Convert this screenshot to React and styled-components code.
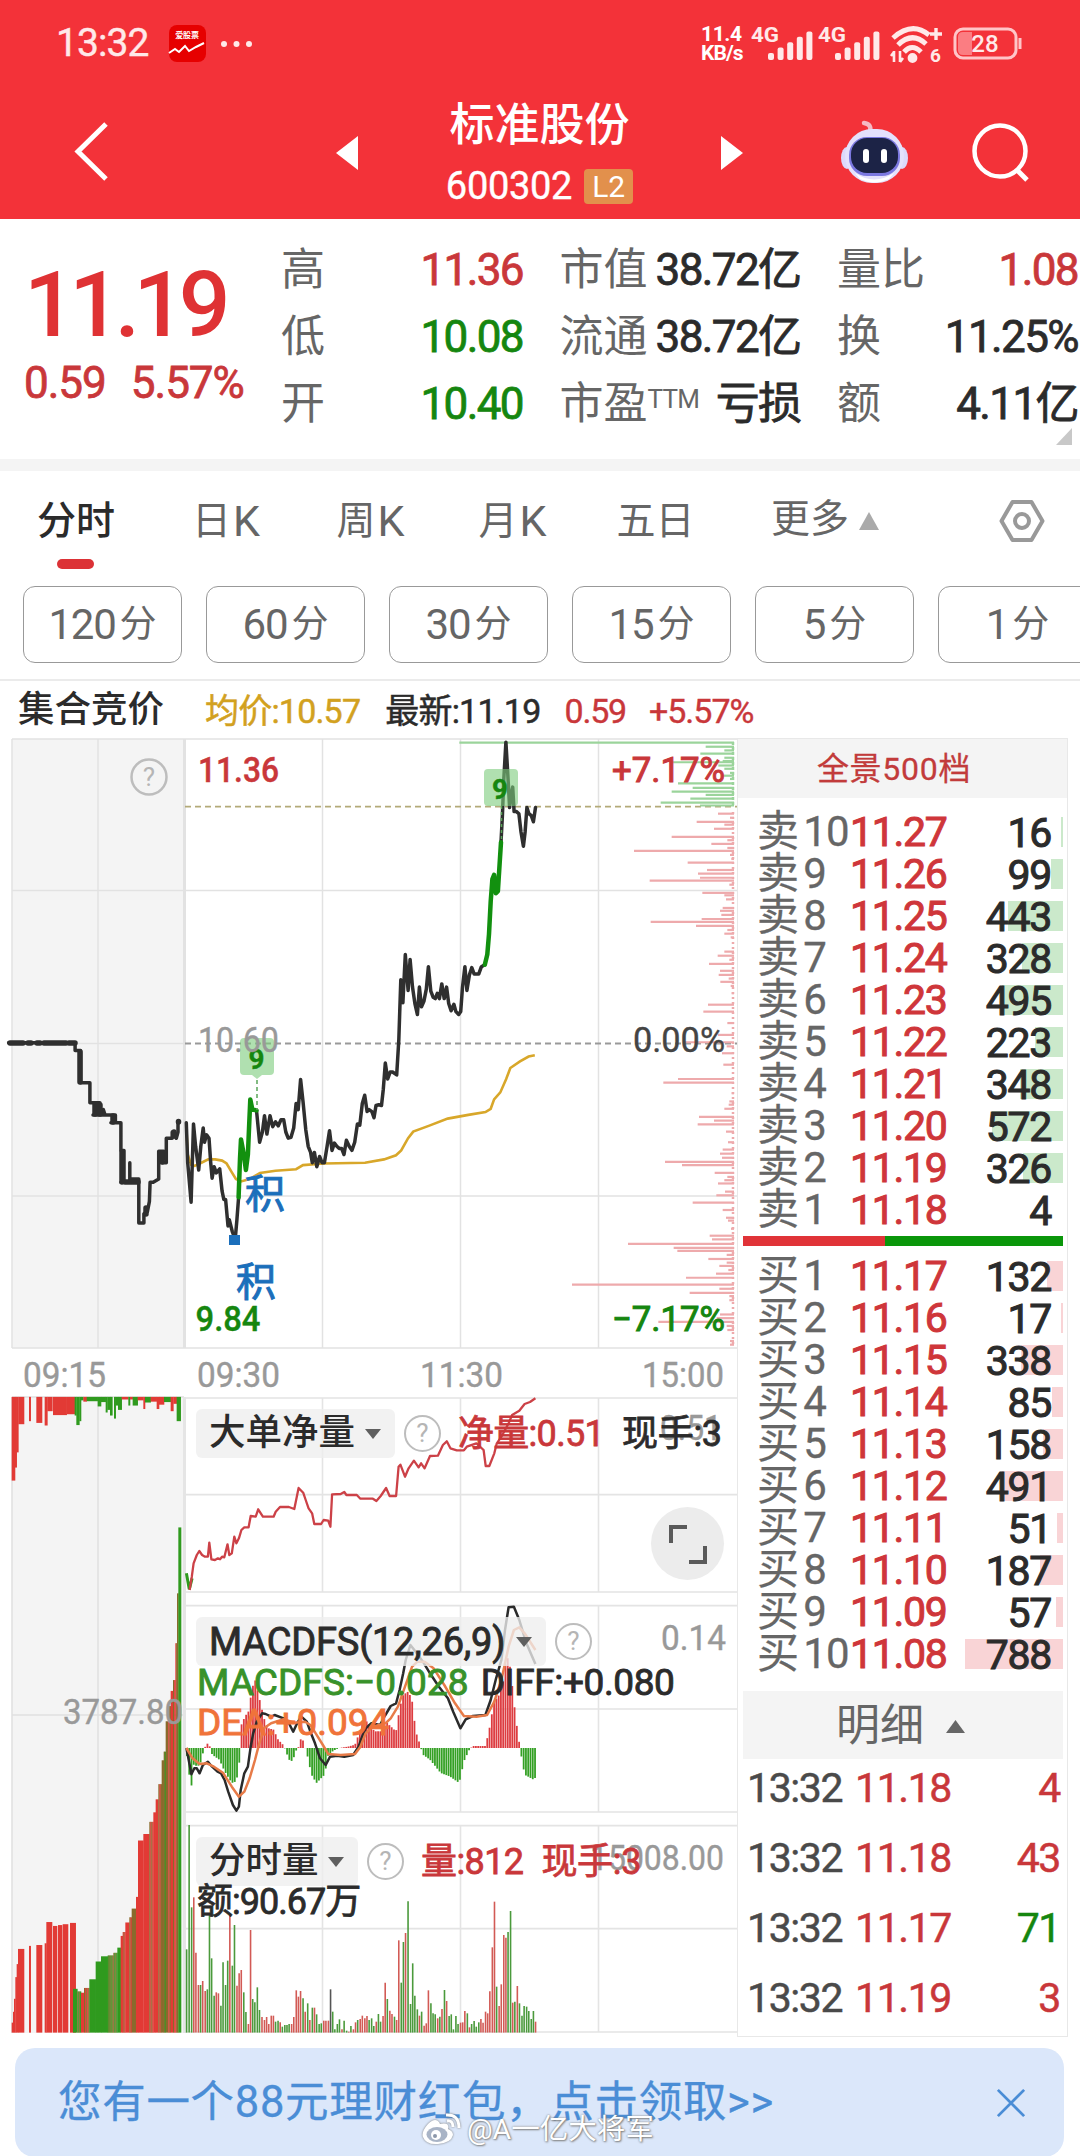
import React from 'react';
import styled, { createGlobalStyle } from 'styled-components';

const RED = '#c9373a';
const BRIGHT_RED = '#df3234';
const GREEN = '#15860f';
const INK = '#2b2b2b';
const GRAY = '#666';
const FONT = `Roboto, "Noto Sans CJK SC", sans-serif`;

const Global = createGlobalStyle`
  html, body { margin: 0; padding: 0; background: #fff; }
  body { font-family: ${FONT}; }
  * { box-sizing: border-box; }
  svg { display: block; overflow: visible; }
`;

const Page = styled.div`
  width: 1080px;
  height: 2156px;
  overflow: hidden;
  background: #fff;
  color: ${INK};
  display: flex;
  flex-direction: column;
`;

const Text = styled.span`
  font-size: ${p => p.$s}px;
  line-height: 1;
  font-weight: ${p => p.$b || 400};
  letter-spacing: ${p => p.$ls || 0}px;
  color: ${p => p.$c || 'inherit'};
  white-space: pre;
  margin-left: ${p => p.$ml || 0}px;
  -webkit-text-stroke: ${p => p.$k || 0}px;
`;

/* ---------- red header ---------- */

const Header = styled.header`
  height: 219px;
  flex: none;
  background: #f33239;
  color: #fff;
`;
const StatusBar = styled.div`
  height: 87px;
  padding: 0 58px 0 56px;
  display: flex;
  align-items: center;
  justify-content: space-between;
`;
const StatusGroup = styled.div`
  display: flex;
  align-items: center;
`;
const AppBadge = styled.div`
  width: 37px;
  height: 37px;
  margin: 0 15px 0 20px;
  border-radius: 8px;
  background: #e60000;
  display: flex;
  flex-direction: column;
  align-items: center;
  justify-content: center;
  gap: 2px;
`;
const Speed = styled.div`
  display: flex;
  flex-direction: column;
  width: 50px;
  font-size: 21px;
  font-weight: 700;
  line-height: 19px;
  letter-spacing: -0.4px;
  span + span { letter-spacing: -0.9px; }
`;
const NavBar = styled.div`
  height: 132px;
  display: grid;
  grid-template-columns: 336px 22px 363px 22px 98px 67px 1fr;
  align-items: center;
`;
const BackSlot = styled.div`
  padding: 0 0 3px 72px;
`;
const TitleBlock = styled.div`
  height: 132px;
  padding-top: 16px;
  display: flex;
  flex-direction: column;
  align-items: center;
  gap: 21px;
`;
const CodeRow = styled.div`
  display: flex;
  align-items: center;
  gap: 12px;
  height: 34px;
`;
const LevelBadge = styled.span`
  width: 49px;
  height: 35px;
  border-radius: 4px;
  background: #e2904c;
  font-size: 30px;
  line-height: 36px;
  text-align: center;
`;

function Signal() {
  return (
    <svg width="67" height="38" viewBox="0 0 67 38" fill="#ffe9e9">
      <text x="0" y="17" fontSize="21" fontWeight="700" textLength="28" lengthAdjust="spacingAndGlyphs" fontFamily="Roboto">4G</text>
      {[0, 1, 2, 3, 4].map(i => (
        <rect key={i} x={17 + i * 9.6} y={28 - i * 5.4} width="6" height={7 + i * 5.4} rx="2" />
      ))}
    </svg>
  );
}

function Robot() {
  return (
    <svg width="67" height="66" viewBox="0 0 67 66">
      <path d="M29 12 Q31 4 23 3" stroke="#f5b9c4" strokeWidth="4.500" fill="none" strokeLinecap="round" />
      <ellipse cx="6" cy="38" rx="6" ry="11" fill="#dcd9fb" />
      <ellipse cx="61" cy="38" rx="6" ry="11" fill="#dcd9fb" />
      <rect x="4" y="9" width="59" height="54" rx="27" fill="#e4e1fc" />
      <path d="M14 53 Q33 66 53 53 L48 59 Q33 66 19 59 Z" fill="#fff" />
      <rect x="8" y="17" width="51" height="39" rx="18" fill="#7b78e0" />
      <rect x="10" y="18" width="47" height="35" rx="16" fill="#1c2346" />
      <rect x="22" y="29" width="6" height="14" rx="3" fill="#fff" />
      <rect x="40" y="29" width="6" height="14" rx="3" fill="#fff" />
    </svg>
  );
}

function AppHeader() {
  return (
    <Header>
      <StatusBar>
        <StatusGroup>
          <Text $s={39} $ls={-0.9} $k={0.4} $c="#ffe9e9">13:32</Text>
          <AppBadge>
            <Text $s={8} $b={700} $c="#fff">爱股票</Text>
            <svg width="36" height="13" viewBox="0 0 36 13" fill="none" stroke="#fff" strokeWidth="2">
              <path d="M0 11 L6 7 L10 10 L16 4 L20 9 L27 5 L35 1" />
            </svg>
          </AppBadge>
          <svg width="34" height="8" viewBox="0 0 34 8" fill="#ffe9e9">
            <circle cx="3" cy="4" r="3" /><circle cx="15.5" cy="4" r="3" /><circle cx="28" cy="4" r="3" />
          </svg>
        </StatusGroup>
        <StatusGroup>
          <Speed><span>11.4</span><span>KB/s</span></Speed>
          <Signal />
          <Signal />
          <svg width="67" height="38" viewBox="0 0 67 38" fill="none" stroke="#ffe9e9" strokeWidth="5">
            <path d="M8 13 Q27 -4 44 10" />
            <path d="M13 20 Q27 6 41 19" />
            <path d="M19 27 Q27 18 36 27" />
            <circle cx="27.5" cy="33" r="2.400" fill="#ffe9e9" />
            <path d="M45 9 H57 M51 3 V15" strokeWidth="3.400" />
            <path d="M9 26 V37 M6 31 L9 27 M15 37 V26 M18 33 L15 37" strokeWidth="2.600" />
            <text x="45" y="37" fontSize="19" fontWeight="700" fill="#ffe9e9" stroke="none" fontFamily="Roboto">6</text>
          </svg>
          <svg width="70" height="34" viewBox="0 0 70 34">
            <rect x="3" y="2" width="61" height="29" rx="8" fill="none" stroke="#ffc5c8" strokeWidth="3" />
            <path d="M11 5 H20 V28 H11 Q6 28 6 23 V10 Q6 5 11 5 Z" fill="#fb7d82" />
            <path d="M68 11 V22" stroke="#ffc5c8" strokeWidth="3" />
            <text x="33" y="25" fontSize="24" fontWeight="500" fill="#ffe9e9" textAnchor="middle" fontFamily="Roboto">28</text>
          </svg>
        </StatusGroup>
      </StatusBar>
      <NavBar>
        <BackSlot>
          <svg width="38" height="62" viewBox="0 0 38 62" fill="none" stroke="#fff" strokeWidth="5">
            <path d="M34 3 L6 30.5 L34 58" />
          </svg>
        </BackSlot>
        <svg width="22" height="34" viewBox="0 0 22 34"><path d="M22 0 V34 L0 17 Z" fill="#fff" /></svg>
        <TitleBlock>
          <Text $s={45} $b={500}>标准股份</Text>
          <CodeRow>
            <Text $s={38} $ls={-0.3} $k={0.4}>600302</Text>
            <LevelBadge>L2</LevelBadge>
          </CodeRow>
        </TitleBlock>
        <svg width="22" height="34" viewBox="0 0 22 34"><path d="M0 0 V34 L22 17 Z" fill="#fff" /></svg>
        <span />
        <Robot />
        <svg width="120" height="66" viewBox="0 0 120 66" fill="none" stroke="#fff" strokeWidth="4.500">
          <circle cx="92" cy="31" r="25.500" />
          <path d="M109 50 L119 60" strokeWidth="5" />
        </svg>
      </NavBar>
    </Header>
  );
}

/* ---------- quote summary ---------- */

const Quote = styled.section`
  height: 240px;
  flex: none;
  display: flex;
  position: relative;
`;
const LastPrice = styled.div`
  width: 281px;
  padding: 41px 0 0 24px;
  display: flex;
  flex-direction: column;
  color: ${BRIGHT_RED};
`;
const ChangeRow = styled.div`
  display: flex;
  gap: 25px;
  margin-top: 10px;
  color: ${RED};
`;
const StatGrid = styled.div`
  display: grid;
  grid-template-columns: 242px 241px 241px;
  grid-auto-rows: 67.2px;
  column-gap: 36.500px;
  padding-top: 17px;
`;
const Stat = styled.div`
  display: flex;
  align-items: center;
  justify-content: space-between;
`;
const StatLabel = styled.span`
  font-size: 44px;
  line-height: 1;
  color: ${GRAY};
  sup { font-size: 26px; line-height: 0; vertical-align: 11px; letter-spacing: -0.8px; }
`;
const StatValue = styled.span`
  font-size: 44px;
  line-height: 1;
  font-weight: ${p => (p.$b ? 500 : 400)};
  letter-spacing: -1.6px;
  color: ${p => p.$c || INK};
  -webkit-text-stroke: 0.8px;
`;
const Corner = styled.svg`
  position: absolute;
  left: 1056px;
  top: 209px;
`;

const STATS = [
  ['高', '11.36', RED], ['市值', '38.72亿'], ['量比', '1.08', RED],
  ['低', '10.08', GREEN], ['流通', '38.72亿'], ['换', '11.25%'],
  ['开', '10.40', GREEN], ['市盈', '亏损'], ['额', '4.11亿'],
];

function QuoteSummary() {
  return (
    <Quote>
      <LastPrice>
        <Text $s={91} $b={500} $ls={-6.4}>11.19</Text>
        <ChangeRow>
          <Text $s={44} $ls={-1} $k={0.8}>0.59</Text>
          <Text $s={44} $ls={-1} $k={0.8}>5.57%</Text>
        </ChangeRow>
      </LastPrice>
      <StatGrid>
        {STATS.map(([label, value, color]) => (
          <Stat key={label}>
            <StatLabel>{label}{label === '市盈' && <sup>TTM</sup>}</StatLabel>
            <StatValue $c={color}>{value}</StatValue>
          </Stat>
        ))}
      </StatGrid>
      <Corner width="16" height="17" viewBox="0 0 16 17"><path d="M16 0 V17 H0 Z" fill="#c8c8c8" /></Corner>
    </Quote>
  );
}

/* ---------- period tabs ---------- */

const Divider = styled.div`
  height: 12px;
  flex: none;
  background: #f4f4f4;
`;
const Tabs = styled.nav`
  height: 115px;
  flex: none;
  display: grid;
  grid-template-columns: 152px 148px 141px 143px 143px 230px 1fr;
  padding-top: 29px;
`;
const Tab = styled.div`
  position: relative;
  display: flex;
  align-items: flex-start;
  justify-content: ${p => p.$j || 'center'};
  font-size: 39px;
  line-height: 43px;
  font-weight: ${p => (p.$on ? 500 : 400)};
  color: ${p => (p.$on ? INK : GRAY)};
  &::after {
    content: '';
    display: ${p => (p.$on ? 'block' : 'none')};
    position: absolute;
    left: 57px;
    top: 59px;
    width: 37px;
    height: 10px;
    border-radius: 5px;
    background: #dc3236;
  }
`;
const Kay = styled.span`
  font-size: 43px;
  line-height: 43px;
  margin-left: 2px;
`;
const Periods = styled.div`
  display: flex;
  flex: none;
  gap: 24px;
  height: 95px;
  padding-left: 23px;
  border-bottom: 2px solid #ebebeb;
`;
const Period = styled.button`
  flex: none;
  width: 159px;
  height: 77px;
  border: 1.500px solid #999;
  border-radius: 12px;
  background: #fff;
  padding: 0;
  font: 400 40px/1 ${FONT};
  color: ${GRAY};
  display: flex;
  align-items: center;
  justify-content: center;
  gap: 4px;
  span:first-child { font-size: 42px; letter-spacing: -1.2px; }
  span:last-child { font-size: 37px; }
`;
const LegendBar = styled.div`
  height: 55px;
  flex: none;
  padding: 4px 0 0 18px;
  display: flex;
  align-items: center;
`;

function PeriodTabs() {
  return (
    <>
      <Tabs>
        <Tab $on>分时</Tab>
        <Tab>日<Kay>K</Kay></Tab>
        <Tab>周<Kay>K</Kay></Tab>
        <Tab>月<Kay>K</Kay></Tab>
        <Tab>五日</Tab>
        <Tab $j="flex-start">
          <Text $s={39} $ml={44}>更多</Text>
          <svg width="32" height="34" viewBox="0 0 32 34"><path d="M10 30 L20 12 L30 30 Z" fill="#aaa" /></svg>
        </Tab>
        <Tab $j="flex-start">
          <svg style={{ marginLeft: 42 }} width="48" height="46" viewBox="0 0 48 46" fill="none" stroke="#999" strokeWidth="4" strokeLinejoin="round">
            <path d="M13.500 2 H32.500 L43.500 21 L32.500 40 H13.500 L2.500 21 Z" />
            <circle cx="23" cy="21" r="7" />
          </svg>
        </Tab>
      </Tabs>
      <Periods>
        {[120, 60, 30, 15, 5, 1].map(n => <Period key={n}><span>{n}</span><span>分</span></Period>)}
      </Periods>
      <LegendBar>
        <Text $s={36.500} $b={500}>集合竞价</Text>
        <Text $s={34} $ml={41} $ls={-0.8} $k={0.5} $c="#d2a11f">均价:10.57</Text>
        <Text $s={34} $ml={25} $ls={-0.8} $k={0.5}>最新:11.19</Text>
        <Text $s={34} $ml={24} $ls={-1.2} $k={0.4} $c={RED}>0.59</Text>
        <Text $s={34} $ml={23} $ls={-1} $k={0.4} $c={RED}>+5.57%</Text>
      </LegendBar>
    </>
  );
}

/* ---------- chart helpers ---------- */

// Series are stored on a fine integer grid; a scale maps that grid to pixels.
const scale = (kx, ox, ky, oy) => ({ x: v => v / kx + ox, y: v => v / ky + oy });
const trace = (s, pts) =>
  pts.trim().split(/\s+/).map(p => {
    const [x, y] = p.split(',').map(Number);
    return `${s.x(x).toFixed(1)},${s.y(y).toFixed(1)}`;
  }).join(' ');

function Label({ x, y, w, s = 35, c = '#999', b = 400, k = 0.4, children }) {
  return (
    <text x={x} y={y} fontSize={s} fill={c} stroke={c} strokeWidth={k} fontWeight={b} textLength={w} lengthAdjust="spacingAndGlyphs" fontFamily={FONT}>
      {children}
    </text>
  );
}

function Help({ cx, cy, r = 17 }) {
  return (
    <g>
      <circle cx={cx} cy={cy} r={r} fill="none" stroke="#bdbdbd" strokeWidth="2.500" />
      <text x={cx} y={cy + 9} fontSize="26" fill="#b5b5b5" textAnchor="middle" fontFamily="Roboto">?</text>
    </g>
  );
}

/* ---------- main intraday chart ---------- */

const P = scale(2.904, 0, 2.45, 730);
const D = scale(3, 440, 2.45, 730);

const AUCTION = '25,766 218,766 218,785 234,785 234,864 261,864 261,913 290,913 290,943 270,943 300,943 300,930 305,943 335,943 335,962 322,962 351,962 351,1030 360,1030 360,1108 351,1108 377,1108 377,1060 377,1100 403,1100 403,1208 418,1208 418,1185 428,1180 434,1155 436,1108 445,1108 461,1100 461,1032 475,1032 472,1060 483,1060 483,1000 500,1000 500,985 512,1000 517,985 517,962';
const PRICE_1 = '541,962 545,1060 555,1157 562,965 568,1020 577,1078 583,1020 590,975 594,1010 600,992 607,1000 612,1060 616,1098 622,1070 628,1085 638,1075 645,1130 650,1150 655,1150 662,1215 666,1200 675,1230 683,1248 688,1200 693,1145';
const RISE_1 = '693,1145 697,1050 700,1003 708,1040 714,1078 720,1040 724,960 727,905 733,930 745,932';
const PRICE_2 = '745,932 754,1010 762,985 768,945 775,990 784,945 792,972 800,960 808,970 816,955 824,955 830,985 837,1000 845,998 853,975 860,915 866,930 873,856 880,910 888,980 895,1020 902,1035 907,1060 913,1035 920,1070 928,1045 935,1060 942,1060 950,1020 957,982 964,1030 971,1012 978,1020 985,1025 992,1025 999,1040 1006,1005 1014,1020 1022,1030 1030,1010 1038,965 1045,968 1052,915 1059,895 1066,935 1072,930 1080,935 1086,950 1092,920 1100,918 1108,920 1113,880 1119,816 1126,855 1133,838 1140,838 1152,845 1158,760 1164,612 1170,668 1177,550 1185,638 1191,562 1198,630 1205,670 1212,697 1218,630 1224,678 1231,665 1238,635 1244,580 1251,640 1258,655 1264,658 1270,645 1276,658 1283,622 1290,658 1297,630 1303,670 1310,688 1318,672 1324,690 1332,697 1338,690 1343,630 1350,580 1356,638 1363,600 1370,582 1377,598 1390,598 1398,580 1408,575';
const RISE_2 = '1408,575 1415,550 1420,500 1425,420 1430,365 1435,355 1440,400 1446,395 1450,340 1455,275';
const PRICE_3 = '1455,275 1459,210 1463,120 1469,30 1474,100 1480,190 1484,160 1489,140 1493,200 1500,200 1507,205 1513,250 1520,285 1525,250 1530,190 1536,205 1543,210 1549,225 1555,190';
const AVERAGE = '541,970 545,1040 555,1065 565,1068 585,1060 605,1052 625,1052 645,1055 658,1062 672,1082 685,1100 700,1106 725,1100 755,1085 800,1080 860,1076 880,1066 940,1062 1060,1060 1115,1052 1150,1042 1165,1030 1185,1000 1200,984 1245,970 1300,952 1360,943 1410,936 1425,928 1435,905 1453,888 1470,855 1482,828 1510,812 1535,800 1553,797';

const PROFILE_UP = '31,58 41,797 50,853 58,781 68,853 76,848 79,697 87,835 95,853 105,870 112,850 120,870 131,714 142,758 151,695 159,797 168,751 178,662 185,780';
const PROFILE_DOWN = '205,834 215,870 225,770 232,853 242,822 262,695 270,862 279,814 289,862 296,582 306,870 316,874 325,743 343,801 352,774 362,780 369,629 379,868 399,787 405,853 415,858 436,848 443,840 453,844 463,785 470,632 480,768 490,862 499,853 508,872 543,853 553,833 563,868 573,807 590,840 600,836 609,866 617,841 627,872 645,875 673,804 690,790 718,862 747,834 765,735 775,860 792,846 820,850 855,714 864,670 890,875 910,868 918,866 928,853 948,777 957,822 966,773 984,858 1010,864 1028,848 1038,840 1048,846 1058,675 1066,726 1085,824 1095,862 1103,853 1111,834 1131,855 1140,829 1158,758 1176,848 1195,858 1202,864 1222,873 1239,809 1248,816 1259,564 1269,701 1276,712 1286,860 1296,805 1305,860 1313,838 1323,865 1332,828 1342,738 1359,396 1369,838 1379,749 1387,868 1397,868 1432,840 1441,830 1450,655 1460,860 1470,862 1497,870 1506,870';

function Profile({ data, color }) {
  return data.split(' ').map(d => {
    const [y, x] = d.split(',').map(Number);
    return <path key={d} d={`M${D.x(x)} ${D.y(y)} H734`} stroke={color} strokeWidth="2.200" />;
  });
}

function MainChart() {
  return (
    <svg width="737" height="656" viewBox="0 736 737 656" fill="none">
      <rect x="12" y="739" width="172" height="609" fill="#f4f4f4" />
      <g stroke="#e2e2e2" strokeWidth="1.500">
        <path d="M12 739 H737 M12 890.500 H737 M12 1043.500 H184 M12 1196 H737 M12 1348 H737" />
        <path d="M12 739 V1348 M98 739 V1348 M322.500 739 V1348 M460.500 739 V1348 M598.500 739 V1348" />
        <path d="M184.500 739 V1348" strokeWidth="3" />
      </g>
      <path d="M185 806.700 H737" stroke="#b3aa78" strokeWidth="1.800" strokeDasharray="6 4" />
      <path d="M185 1043.500 H737" stroke="#999" strokeWidth="1.800" strokeDasharray="6 4" />
      <Profile data={PROFILE_UP} color="#9bd49b" />
      <Profile data={PROFILE_DOWN} color="#eeaaac" />
      <path d="M733 742 V806" stroke="#9bd49b" strokeWidth="2.500" strokeDasharray="3 2" />
      <path d="M733 812 V1345" stroke="#eeaaac" strokeWidth="2.500" strokeDasharray="2 3" />

      <polyline points={trace(P, AVERAGE)} stroke="#d8a72a" strokeWidth="2.600" />
      <g strokeLinejoin="round" strokeLinecap="round" stroke="#2f2f2f" strokeWidth="3.500">
        <polyline points={trace(P, AUCTION)} />
        <path d="M10 1043 H23 M28 1043 H31 M37 1043 H40 M44 1043 H66 M69 1043 H75 M95 1104 V1114 M100 1105 V1114 M122 1152 V1182 M125 1182 H138 M80 1052 V1082 M113 1116 V1122 M162 1153 V1162 M146 1208 V1214 M174 1132 V1136 M178.500 1121.500 V1122" strokeWidth="5.500" />
        <polyline points={trace(P, PRICE_1)} />
        <polyline points={trace(P, PRICE_2)} />
        <polyline points={trace(P, PRICE_3)} />
      </g>
      <g strokeLinejoin="round" strokeLinecap="round" stroke="#12900f" strokeWidth="4.500">
        <polyline points={trace(P, RISE_1)} />
        <polyline points={trace(P, RISE_2)} />
      </g>

      <path d="M244 1038 h26 q4 0 4 4 v29 q0 4 -4 4 h-8 l-5 4 l-5 -4 h-8 q-4 0 -4 -4 v-29 q0 -4 4 -4 z" fill="#7ccb7c" fillOpacity="0.6" />
      <path d="M257 1080 V1110" stroke="#5aa55a" strokeDasharray="4 3" strokeWidth="1.500" />
      <rect x="484" y="769" width="34" height="37" rx="4" fill="#7ccb7c" fillOpacity="0.6" />
      <path d="M501.500 806 V840" stroke="#5aa55a" strokeDasharray="3 3" strokeWidth="1.500" />
      <Label x={248.500} y={1069} w={16} s={28} b={700} c={GREEN}>9</Label>
      <Label x={492} y={799} w={16} s={28} b={700} c={GREEN}>9</Label>

      <rect x="229" y="1235" width="11" height="10" fill="#1b6fbb" />
      <Label x={245} y={1208} w={40} s={40} k={1} c="#1b6fbb">积</Label>
      <Label x={236} y={1296} w={40} s={40} k={1} c="#1b6fbb">积</Label>

      <Help cx={149} cy={777} r={17.500} />
      <Label x={198} y={782} w={81} b={500} c={RED}>11.36</Label>
      <Label x={198} y={1052} w={81}>10.60</Label>
      <Label x={195.500} y={1331} w={65} b={500} c={GREEN}>9.84</Label>
      <Label x={612} y={782} w={113} k={1} c={RED}>+7.17%</Label>
      <Label x={633} y={1052} w={92} c="#444">0.00%</Label>
      <Label x={612} y={1331} w={113} k={1} c={GREEN}>−7.17%</Label>

      <Label x={23} y={1387} w={83}>09:15</Label>
      <Label x={197} y={1387} w={83}>09:30</Label>
      <Label x={420} y={1387} w={83}>11:30</Label>
      <Label x={642} y={1387} w={82}>15:00</Label>
    </svg>
  );
}

/* ---------- call auction volume ---------- */

const V = scale(3, 0, 2.306, 1370);
const VR = '#e23a35';
const VG = '#2f9a1e';
const VB = '#8a6a2c';

// [from, to, edge, colours]; several colours alternate as thin stripes.
const TOP_BARS = [
  [35, 45, 255, VR], [45, 50, 225, VR], [50, 55, 190, VR], [55, 72, 125, VR], [87, 92, 118, VR],
  [109, 126, 122, VR], [134, 142, 128, VR], [142, 157, 95, VR], [159, 200, 104, VR], [201, 224, 102, VR],
  [224, 229, 105, VG], [229, 238, 127, VG], [238, 243, 118, VG], [243, 250, 70, VG], [250, 260, 73, VR],
  [260, 293, 72, VG], [293, 303, 84, VG], [303, 317, 74, VG], [317, 322, 98, VG], [322, 330, 92, VG],
  [330, 337, 105, VG], [342, 347, 112, VG], [347, 354, 82, VG], [354, 365, 92, VG], [365, 385, 68, VR],
  [385, 390, 82, VG], [390, 398, 68, VR], [398, 413, 82, VG], [413, 430, 70, VR], [430, 435, 90, VR],
  [435, 452, 75, VG], [452, 470, 73, VR], [470, 477, 90, VR], [477, 492, 80, VR], [492, 512, 74, VG],
  [512, 520, 95, VR], [520, 530, 78, VR], [530, 542, 118, VG],
];
const BOTTOM_BARS = [
  [35, 39, 1505, VR], [39, 42, 1480, VR], [42, 46, 1450, VR], [46, 50, 1400, VR], [50, 54, 1370, VR],
  [54, 72, 1335, VR], [87, 92, 1328, VR], [109, 126, 1326, VR], [134, 139, 1322, VR], [139, 156, 1273, VR],
  [159, 171, 1282, VR], [174, 186, 1280, VR], [188, 204, 1278, VR], [210, 227, 1275, VR],
  [219, 232, 1427, VG], [232, 243, 1433, VB, VG], [243, 252, 1436, VR], [252, 268, 1425, VB, VR],
  [268, 287, 1405, VG], [287, 303, 1364, VG], [303, 323, 1352, VG], [323, 340, 1350, VG, VB],
  [340, 352, 1344, VB, VG], [352, 362, 1332, VG], [362, 368, 1305, VR], [368, 376, 1296, VR, VB],
  [376, 388, 1274, VR], [388, 395, 1262, VB, VR], [395, 408, 1242, VB], [408, 414, 1215, VR],
  [414, 430, 1085, VR], [430, 448, 1070, VR], [448, 460, 1042, VB, VR], [460, 467, 1020, VR],
  [467, 475, 990, VR], [475, 485, 955, VB, VR], [485, 491, 900, VB], [491, 497, 880, VB, VG],
  [497, 505, 810, VB], [505, 512, 775, VR, VB], [512, 519, 740, VR], [519, 526, 715, VB, VR],
  [526, 531, 630, VR, VB], [531, 535, 515, VB], [535, 543, 363, VG],
];

function AuctionBars({ bars, base }) {
  return bars.flatMap(([from, to, edge, ...colors]) => {
    const n = colors.length > 1 ? Math.round((to - from) / 3) : 1;
    const w = (to - from) / n;
    const top = V.y(Math.min(edge, base));
    const h = Math.abs(V.y(edge) - V.y(base));
    return Array.from({ length: n }, (_, i) => (
      <rect key={`${from}-${i}`} x={V.x(from + i * w)} y={top} width={w / 3 + 0.3} height={h} fill={colors[i % colors.length]} />
    ));
  });
}

const Lower = styled.div`
  display: flex;
  height: 644px;
`;
const PanelStack = styled.div`
  flex: 1;
  display: flex;
  flex-direction: column;
`;

function AuctionVolume() {
  return (
    <svg width="186" height="644" viewBox="0 1392 186 644" fill="none">
      <rect x="12" y="1397" width="172" height="636" fill="#f4f4f4" />
      <path d="M12 1397 V2033 M98 1397 V2033 M12 1715 H184 M12 1397 H184" stroke="#e0e0e0" strokeWidth="1.500" />
      <path d="M184.500 1397 V2033" stroke="#e5e5e5" strokeWidth="3" />
      <AuctionBars bars={TOP_BARS} base={62} />
      <AuctionBars bars={BOTTOM_BARS} base={1528} />
      <Label x={63} y={1724} w={120}>3787.80</Label>
    </svg>
  );
}

/* ---------- indicator panels ---------- */

const Panel = styled.div`
  position: relative;
  height: ${p => p.$h}px;
`;
const PanelLegend = styled.div`
  position: absolute;
  left: 10px;
  top: ${p => p.$top}px;
  display: flex;
  flex-wrap: wrap;
  align-items: center;
  width: 541px;
`;
const Pill = styled.div`
  width: ${p => p.$w}px;
  height: 49px;
  padding: 0 14px 0 13px;
  border-radius: 6px;
  background: rgba(238, 238, 238, 0.78);
  display: flex;
  align-items: center;
  justify-content: space-between;
`;
const Caret = styled.i`
  border: 8px solid transparent;
  border-top: 10px solid #5f5f5f;
  border-bottom: 0;
`;
const HelpDot = styled.span`
  width: 37px;
  height: 37px;
  margin-left: 9px;
  border: 2.500px solid #bdbdbd;
  border-radius: 50%;
  font-size: 26px;
  line-height: 32px;
  text-align: center;
  color: #b5b5b5;
`;
const Line = styled.div`
  width: 100%;
  height: 40px;
  padding-left: 1px;
  display: flex;
  align-items: center;
  margin-top: ${p => p.$mt || 0}px;
`;
const Expand = styled.button`
  position: absolute;
  left: 465px;
  top: 115px;
  width: 73px;
  height: 73px;
  padding: 0;
  border: 0;
  border-radius: 50%;
  background: #ececec;
`;

function Grid({ top, mid, bottom }) {
  return (
    <path
      d={`M186 ${top} H737 M186 ${mid} H737 M186 ${bottom} H737 M322.500 ${top} V${bottom} M460.500 ${top} V${bottom} M598.500 ${top} V${bottom}`}
      stroke="#e4e4e4" strokeWidth="1.600"
    />
  );
}

const N = scale(2.8, 180, 3, 1390);
const NET = '27,600 33,560 38,520 47,495 54,483 62,495 70,500 78,500 82,458 88,508 98,510 106,505 112,508 118,500 124,502 133,463 138,495 145,490 152,440 158,460 165,445 172,420 180,412 192,412 198,378 212,380 219,358 232,380 262,380 268,365 280,351 305,351 320,357 327,320 332,294 345,308 352,330 360,355 370,370 376,402 395,402 402,390 415,392 421,410 426,313 450,312 460,306 466,315 495,315 505,326 540,326 550,333 562,318 577,294 587,318 605,318 612,230 617,224 630,260 640,235 655,212 668,232 675,220 685,235 700,198 722,197 736,165 747,154 757,175 775,181 795,181 803,170 830,160 850,180 856,228 866,228 880,190 887,160 900,140 920,100 930,75 950,62 965,42 980,36 995,25';

function NetPanel() {
  return (
    <Panel $h={207}>
      <svg width="551" height="207" viewBox="186 1392 551 207" fill="none">
        <Grid top={1398} mid={1494.600} bottom={1592} />
        <polyline points={trace(N, '18,550 26,598 34,565')} stroke={VG} strokeWidth="3" />
        <polyline points={trace(N, NET)} stroke="#cc4147" strokeWidth="2.300" strokeLinejoin="round" />
        <Label x={660} y={1440} w={62}>0.51</Label>
      </svg>
      <PanelLegend $top={17}>
        <Pill $w={199}><Text $s={36.500} $b={500}>大单净量</Text><Caret /></Pill>
        <HelpDot>?</HelpDot>
        <Text $s={36} $k={0.8} $ls={-0.7} $ml={17} $c={RED}>净量:0.51</Text>
        <Text $s={36} $k={0.8} $ls={-0.3} $ml={18}>现手:3</Text>
      </PanelLegend>
      <Expand>
        <svg width="73" height="73" viewBox="0 0 73 73" fill="none" stroke="#5a5a5a" strokeWidth="4">
          <path d="M20 36 V20 H36 M54 39 V55 H38" />
        </svg>
      </Expand>
    </Panel>
  );
}

const M = scale(2.8, 180, 3, 1590);
const DIFF = '18,474 28,530 32,553 40,535 47,535 55,550 64,525 78,515 90,530 105,545 115,550 125,570 135,605 148,645 158,662 165,650 170,600 180,550 190,530 198,470 205,430 215,395 230,370 240,372 255,380 265,375 290,385 305,400 317,425 328,400 340,380 355,395 365,425 378,460 392,505 408,525 420,500 440,497 460,500 485,495 500,470 510,440 520,415 535,400 560,405 575,375 590,348 605,340 615,300 625,250 632,210 645,165 660,185 680,215 700,250 725,290 750,325 765,365 785,415 800,388 820,378 855,375 870,330 885,265 900,210 910,120 920,52 935,50 950,90 970,160 995,222';
const DEA = '18,474 35,505 55,522 75,520 95,530 120,548 145,590 165,620 180,605 195,565 210,510 222,460 235,415 255,400 290,388 320,398 350,395 365,405 380,430 400,465 415,492 450,495 490,492 505,470 520,430 540,410 575,400 590,385 610,350 630,290 650,230 665,215 685,215 710,235 740,285 770,340 795,378 830,380 860,375 880,335 900,270 920,170 935,120 950,112 965,130 995,180';
const HIST = '18:-10 25:-75 32:-115 38:-50 50:-55 60:-40 66:-5 76:14 84:4 90:-20 110:-35 125:-70 145:-105 158:-100 168:-30 172:70 182:95 192:110 202:180 210:205 222:150 235:90 245:60 262:55 275:25 290:8 296:-8 305:-35 315:-40 325:-8 335:8 340:38 348:10 356:-20 368:-80 382:-105 405:-80 415:-20 430:-8 445:0 470:4 490:10 500:40 515:90 545:50 565:50 580:75 605:50 615:120 625:160 640:170 650:140 660:50 672:10 680:-20 700:-35 730:-75 755:-85 782:-105 795:-40 810:-5 820:6 855:6 865:50 880:145 890:150 905:200 915:280 925:240 940:90 950:15 958:-40 965:-80 990:-95 998:-85'
  .split(' ').map(p => p.split(':').map(Number));

function histAt(x) {
  const i = Math.max(1, HIST.findIndex(([hx]) => hx >= x));
  const [x0, v0] = HIST[i - 1];
  const [x1, v1] = HIST[i];
  return v0 + ((v1 - v0) * (x - x0)) / (x1 - x0);
}

function MacdPanel() {
  const zero = M.y(474);
  return (
    <Panel $h={220}>
      <svg width="551" height="220" viewBox="186 1599 551 220" fill="none">
        <Grid top={1605.600} mid={1709} bottom={1812} />
        {Array.from({ length: 154 }, (_, i) => {
          const x = 19.500 + i * 6.370;
          const v = histAt(x);
          return <path key={i} d={`M${M.x(x)} ${zero} v${-v / 3}`} stroke={v > 0 ? '#dd3c40' : '#34a024'} strokeWidth="1.800" />;
        })}
        <polyline points={trace(M, DIFF)} stroke="#2b2b2b" strokeWidth="2.500" strokeLinejoin="round" />
        <polyline points={trace(M, DEA)} stroke="#e77b48" strokeWidth="2.500" strokeLinejoin="round" />
        <Label x={661} y={1650} w={65}>0.14</Label>
      </svg>
      <PanelLegend $top={18}>
        <Pill $w={350}><Text $s={38} $k={0.9} $ls={-0.2}>MACDFS(12,26,9)</Text><Caret /></Pill>
        <HelpDot>?</HelpDot>
        <Line $mt={-4}>
          <Text $s={37} $k={0.9} $ls={0.1} $c="#38922a">MACDFS:−0.028</Text>
          <Text $s={37} $k={0.9} $ml={12} $ls={-0.4}>DIFF:+0.080</Text>
        </Line>
        <Line><Text $s={37} $k={0.9} $ls={0} $c="#f0733a">DEA:+0.094</Text></Line>
      </PanelLegend>
    </Panel>
  );
}

const VOLUME = '18:388g 25:15g 32:262g 38:232r 44:398r 51:495r 57:495g 63:483r 70:513r 76:508g 82:285g 88:415g 95:527g 101:517r 107:520r 114:557g 120:427g 127:495g 133:422g 139:285r 146:437g 152:315g 159:497r 165:460r 171:450r 178:517g 184:576g 191:612r 197:330r 203:537g 209:547g 216:502g 222:570g 229:591r 236:600r 242:591r 248:612r 255:587r 261:587r 267:605g 274:602g 280:607r 286:620g 293:615g 299:615g 305:612g 312:612r 318:591r 325:511r 331:530r 337:513r 344:535g 350:575r 357:550g 363:600r 370:563g 376:563r 382:583g 389:612g 395:610g 402:602r 408:602r 415:602r 421:508k 427:575g 433:628g 440:612g 446:598g 453:628r 459:602g 466:632g 472:635r 478:618g 485:628r 491:607r 497:600g 504:597r 510:587r 517:595r 523:588r 529:600g 536:595g 542:618g 549:605r 555:582g 561:605g 568:588r 574:488r 580:537g 587:572r 593:582r 600:590g 606:600r 612:361r 619:488g 625:366g 631:339r 638:244g 645:552g 651:430g 657:527g 664:568g 670:587r 676:575g 683:617r 689:610r 695:511r 702:550g 708:580g 714:583g 721:595r 727:590g 733:567r 740:510g 746:543r 753:588g 759:583g 765:628g 772:588g 778:612g 785:608r 791:607r 797:573r 804:580g 810:622r 816:612g 823:603g 829:620g 836:607g 842:597r 848:608r 855:575r 861:580r 867:514r 874:382r 880:245r 886:500g 893:558r 899:493r 906:345r 912:353r 918:336g 925:273g 931:548r 937:545g 944:498r 950:550g 957:587g 963:558g 970:560g 976:573g 983:597g 989:573g 995:605r'.split(' ');
const VOLUME_COLORS = { r: '#d25a55', g: '#4b9a3c', k: '#555' };

function VolumePanel() {
  return (
    <Panel $h={217}>
      <svg width="551" height="217" viewBox="186 1819 551 217" fill="none">
        <Grid top={1825.600} mid={1928.600} bottom={2032} />
        {VOLUME.map(v => {
          const [x, rest] = v.split(':');
          return (
            <path key={x} d={`M${Number(x) / 2.8 + 180.200} 2032.600 V${parseInt(rest, 10) / 3 + 1820}`}
              stroke={VOLUME_COLORS[rest.slice(-1)]} strokeWidth="1.600" />
          );
        })}
        <Label x={590} y={1870} w={134}>15008.00</Label>
      </svg>
      <PanelLegend $top={18}>
        <Pill $w={162}><Text $s={36.500} $b={500}>分时量</Text><Caret /></Pill>
        <HelpDot>?</HelpDot>
        <Text $s={36} $k={0.8} $ls={-0.6} $ml={17} $c={RED}>量:812</Text>
        <Text $s={36} $k={0.8} $ls={-0.3} $ml={18} $c={RED}>现手:3</Text>
        <Line $mt={-4}><Text $s={36} $k={0.8} $ls={-1}>额:90.67万</Text></Line>
      </PanelLegend>
    </Panel>
  );
}

/* ---------- order book ---------- */

const Body = styled.main`
  display: flex;
  height: 1300px;
  flex: none;
`;
const Charts = styled.div`
  width: 737px;
`;
const Side = styled.aside`
  width: 331px;
  height: 1299px;
  margin-top: 2px;
  border: 1.500px solid #e8e8e8;
  padding-right: 4px;
`;
const Panorama = styled.div`
  height: 59px;
  margin-right: -4px;
  background: #f4f4f4;
  color: #c23b3b;
  display: flex;
  align-items: center;
  justify-content: center;
  padding-right: 17px;
  margin-bottom: 12px;
`;
const BookRow = styled.div`
  height: 42px;
  display: grid;
  grid-template-columns: 93px 100px 1fr;
  align-items: center;
  padding-left: 19px;
  font-size: 41px;
  line-height: 44px;
  letter-spacing: -1.3px;
  -webkit-text-stroke: 1px;
`;
const Level = styled.span`
  color: ${GRAY};
  -webkit-text-stroke: 0.3px;
  letter-spacing: -0.8px;
  white-space: nowrap;
  display: flex;
  gap: 5px;
  span { font-size: 42px; }
`;
const PriceCell = styled.span`
  color: #cf363a;
`;
const Quantity = styled.span`
  height: 30px;
  line-height: 32px;
  padding-right: 12px;
  text-align: right;
  color: ${INK};
  background: linear-gradient(${p => p.$c}, ${p => p.$c}) right / ${p => p.$w}px 100% no-repeat;
`;
const Ratio = styled.div`
  display: flex;
  height: 10px;
  margin: 6px 0 8px 5px;
  background: #0a960a;
  &::before { content: ''; width: 142px; background: #e03338; }
`;
const DetailHead = styled.div`
  height: 68px;
  margin: 17px 0 0 5px;
  background: #f4f4f4;
  color: ${GRAY};
  display: flex;
  align-items: center;
  justify-content: center;
  gap: 22px;
  padding: 2px 5px 0 0;
`;
const Trade = styled.div`
  height: 70px;
  display: grid;
  grid-template-columns: 108px 100px 1fr;
  align-items: center;
  padding: 0 3px 12px 9px;
  font-size: 41px;
  letter-spacing: -1.4px;
  -webkit-text-stroke: 0.5px;
  color: ${RED};
  span:first-child { color: #4a4a4a; }
  span:last-child { text-align: right; color: ${p => p.$c}; }
`;

const ASKS = [[10, '11.27', 16], [9, '11.26', 99], [8, '11.25', 443], [7, '11.24', 328], [6, '11.23', 495], [5, '11.22', 223], [4, '11.21', 348], [3, '11.20', 572], [2, '11.19', 326], [1, '11.18', 4]];
const BIDS = [[1, '11.17', 132], [2, '11.16', 17], [3, '11.15', 338], [4, '11.14', 85], [5, '11.13', 158], [6, '11.12', 491], [7, '11.11', 51], [8, '11.10', 187], [9, '11.09', 57], [10, '11.08', 788]];
const TRADES = [['11.18', 4, RED], ['11.18', 43, RED], ['11.17', 71, GREEN], ['11.19', 3, RED]];

function Rows({ side, rows, color }) {
  return rows.map(([level, price, qty]) => (
    <BookRow key={level}>
      <Level><span>{side}</span><span>{level}</span></Level>
      <PriceCell>{price}</PriceCell>
      <Quantity $c={color} $w={Math.round(qty * 0.124)}>{qty}</Quantity>
    </BookRow>
  ));
}

function OrderBook() {
  return (
    <Side>
      <Panorama><Text $s={32} $ls={0.7} $k={0.3}>全景500档</Text></Panorama>
      <Rows side="卖" rows={ASKS} color="#cbe9cb" />
      <Ratio />
      <Rows side="买" rows={BIDS} color="#f9d4d6" />
      <DetailHead>
        <Text $s={44}>明细</Text>
        <svg width="19" height="13" viewBox="0 0 19 13"><path d="M9.500 0 L19 13 H0 Z" fill="#666" /></svg>
      </DetailHead>
      {TRADES.map(([price, qty, color]) => (
        <Trade key={price + qty} $c={color}><span>13:32</span><span>{price}</span><span>{qty}</span></Trade>
      ))}
    </Side>
  );
}

/* ---------- promo banner ---------- */

const Promo = styled.footer`
  position: relative;
  flex: none;
  height: 109px;
  margin: 12px 16px 0 15px;
  padding: 0 38px 0 43px;
  border-radius: 20px;
  background: #dbe7fa;
  color: #4a8dd6;
  display: flex;
  align-items: center;
  justify-content: space-between;
`;
const Watermark = styled.div`
  position: absolute;
  left: 406px;
  top: 65px;
  display: flex;
  align-items: center;
  gap: 6px;
  color: #fff;
  font-size: 28.500px;
  line-height: 34px;
  text-shadow: 0 0 2px #777, 1px 1px 2px #888;
  svg { filter: drop-shadow(0 0 1px #777); }
`;

function PromoBanner() {
  return (
    <Promo>
      <Text $s={43.500} $ls={0.7} $k={0.3}>您有一个88元理财红包，点击领取&gt;&gt;</Text>
      <svg width="30" height="30" viewBox="0 0 32 32" stroke="#4a8dd6" strokeWidth="3"><path d="M2 2 L30 30 M30 2 L2 30" /></svg>
      <Watermark>
        <svg width="40" height="34" viewBox="0 0 40 34" fill="none" stroke="#fff" strokeWidth="3">
          <path d="M18 9 Q14 4 7 11 Q0 19 2 24 Q5 32 17 31 Q30 30 32 22 Q32 18 27 16 Q29 9 19 11 Z" fill="#fff" stroke="none" />
          <ellipse cx="16" cy="21.500" rx="10.500" ry="7.500" fill="#a9b4c6" stroke="none" />
          <circle cx="15" cy="22" r="5" fill="#fff" stroke="none" />
          <circle cx="14" cy="23" r="2" fill="#8d98aa" stroke="none" />
          <path d="M26 8 Q32 7 32 14" />
          <path d="M25 2 Q38 1 38 15" />
        </svg>
        <span>@A一亿大将军</span>
      </Watermark>
    </Promo>
  );
}

export default function App() {
  return (
    <Page>
      <Global />
      <AppHeader />
      <QuoteSummary />
      <Divider />
      <PeriodTabs />
      <Body>
        <Charts>
          <MainChart />
          <Lower>
            <AuctionVolume />
            <PanelStack>
              <NetPanel />
              <MacdPanel />
              <VolumePanel />
            </PanelStack>
          </Lower>
        </Charts>
        <OrderBook />
      </Body>
      <PromoBanner />
    </Page>
  );
}
